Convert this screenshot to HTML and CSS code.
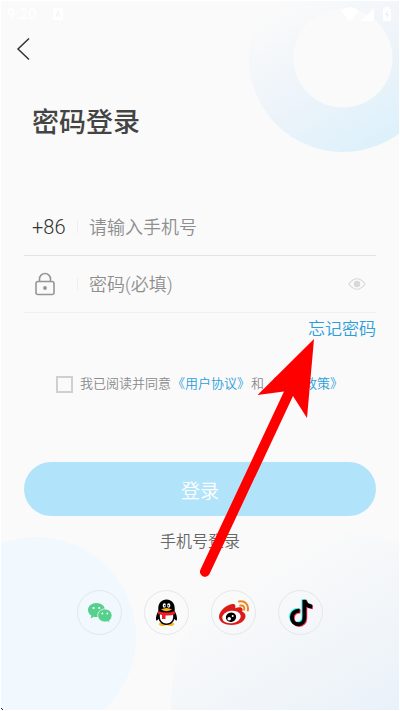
FILE: index.html
```html
<!DOCTYPE html>
<html lang="zh-CN">
<head>
    <meta charset="UTF-8">
    <meta name="viewport" content="width=device-width, initial-scale=1.0">
    <title>密码登录</title>

    <link rel="stylesheet" href="styles.css">
</head>
<body>
    <div class="page">
        <!-- background circles -->
        <div class="circle circle-top"></div>
        <div class="circle circle-left"></div>
        <div class="circle circle-right"></div>

        <div class="status-bar">
            <span class="time">9:20</span>
            <svg class="app-icon" width="12" height="12" viewBox="0 0 12 12">
                <rect x="1" width="10" height="12" rx="2" fill="#fff"/>
                <path d="M4 9 6 3 8 9M4.500 7h3" stroke="#f5f5f5" fill="none"/>
            </svg>
            <svg class="signals" width="52" height="16" viewBox="0 0 52 16">
                <path d="M0 4.500Q9 -2.500 18 4.500L9 15Z" fill="#fff"/>
                <path d="M20 15 33 2V15Z" fill="#fff"/>
                <path d="M42 3h2V1h4v2h2v12h-8Z" fill="#fff"/>
                <path d="M47 4l-3 5h2l-1 4 3-5h-2Z" fill="#e3eff7"/>
            </svg>
        </div>

        <header class="top">
            <button class="btn-back" type="button" aria-label="返回">
                <svg width="14" height="24" viewBox="0 0 14 24">
                    <path d="M13 1.500 2 12 13 22.500" fill="none" stroke="#333" stroke-width="1.500"/>
                </svg>
            </button>
        </header>

        <main class="content">
            <h1 class="title">密码登录</h1>

            <form class="form">
                <div class="field">
                    <label class="prefix" for="phone">+86</label>
                    <input id="phone" type="tel" placeholder="请输入手机号">
                </div>
                <div class="field field-light">
                    <label class="prefix" for="password" aria-label="密码">
                        <svg class="lock" width="20" height="24" viewBox="0 0 20 24">
                            <rect x="1" y="9.500" width="18" height="13" rx="2" fill="none" stroke="#969696" stroke-width="1.600"/>
                            <path d="M4.500 9.500V7a5.500 5.500 0 0 1 11 0v2.500" fill="none" stroke="#969696" stroke-width="1.600"/>
                            <circle cx="10" cy="16" r="1.900" fill="#969696"/>
                        </svg>
                    </label>
                    <input id="password" type="password" placeholder="密码(必填)">
                    <button class="btn-eye" type="button" aria-label="显示密码">
                        <svg width="18" height="12" viewBox="0 0 18 12">
                            <path d="M.8 6Q9-4.500 17.200 6 9 16.500.8 6Z" fill="none" stroke="#d8d8d8" stroke-width="1.200"/>
                            <circle cx="9" cy="6" r="3.200" fill="#d8d8d8"/>
                        </svg>
                    </button>
                </div>

                <a class="forgot" href="#">忘记密码</a>

                <div class="agree">
                    <input id="agree" type="checkbox">
                    <label for="agree">我已阅读并同意</label>
                    <a href="#">《用户协议》</a>
                    <span>和</span>
                    <a href="#">《隐私政策》</a>
                </div>

                <button class="btn-login" type="submit">登录</button>
            </form>

            <a class="phone-login" href="#">手机号登录</a>

            <div class="socials">
                <button class="social" type="button" aria-label="微信">
                    <svg width="24" height="20" viewBox="0 0 24 20">
                        <path d="M8.500 0C3.800 0 0 3.100 0 7c0 2.300 1.300 4.200 3.300 5.500L2.700 15.500 5.800 13.700C10 15 17 12.500 17 7 17 3.100 13.200 0 8.500 0Z" fill="#56d08d"/>
                        <path d="M17 6c-4 0-7.300 2.900-7.300 6.500S13 19 17 19c.9 0 1.800-.1 2.600-.4L22 20l-.6-2.500c1.600-1.200 2.600-3 2.600-5C24 8.900 21 6 17 6Z" fill="#56d08d" stroke="#f3f9fd" stroke-width=".8"/>
                        <g fill="#fff">
                            <circle cx="5.600" cy="5" r="1.100"/>
                            <circle cx="11.200" cy="5" r="1.100"/>
                            <circle cx="14.400" cy="10.500" r=".9"/>
                            <circle cx="19.300" cy="10.500" r=".9"/>
                        </g>
                    </svg>
                </button>
                <button class="social" type="button" aria-label="QQ">
                    <svg width="23" height="28" viewBox="0 0 22 28">
                        <path d="M3.500 25c0-1.500 3-2 5-1.500h5c2-.5 5 0 5 1.500 0 2.500-5.500 2.200-7.500 1-2 1.200-7.500 1.500-7.500-1Z" fill="#fbb416"/>
                        <path d="M11 .5C6 .5 2.800 4.200 2.800 9v3C1.500 14.500 0 18 .6 21c.3 1.200 1.400.5 2.400-1.200C4 23.500 7 26 11 26s7-2.500 8-6.200c1 1.700 2.100 2.400 2.400 1.200.6-3-.9-6.500-2.200-9V9c0-4.800-3.200-8.500-8.200-8.500Z" fill="#000"/>
                        <path d="M4.500 15h13c1 5-1.500 9.500-6.500 9.500S3.500 20 4.500 15Z" fill="#fff"/>
                        <ellipse cx="8.800" cy="6.500" rx="1.600" ry="2.200" fill="#fff"/>
                        <ellipse cx="13.200" cy="6.500" rx="1.600" ry="2.200" fill="#fff"/>
                        <circle cx="9.300" cy="6.800" r=".8"/>
                        <circle cx="12.800" cy="6.800" r=".8"/>
                        <path d="M5.500 10.500Q11 7.500 16.500 10.500 11 14 5.500 10.500Z" fill="#fbb416"/>
                        <path d="M2.800 12Q11 15 19.200 12L19.600 15Q15 17 10 16.500V20H6.500V16Q4 15.700 2.400 15Z" fill="#ee1c24"/>
                    </svg>
                </button>
                <button class="social" type="button" aria-label="微博">
                    <svg width="32" height="26" viewBox="0 0 32 26">
                        <path d="M11 5C5.500 7 1 12.500 1 17c0 5 6 8 12.500 8C22 25 27.500 20.500 27.500 16c0-2.500-1.600-3.700-3.300-4.300.8-2.200.3-3.700-1-4.200-1.600-.6-4 0-6 .8.800-3.200-.2-6-6.200-3.300Z" fill="#db1b17"/>
                        <ellipse cx="13.500" cy="17" rx="9.300" ry="6.300" transform="rotate(-7 13.500 17)" fill="#fff"/>
                        <ellipse cx="13" cy="17.200" rx="5.200" ry="4.700" transform="rotate(-15 13 17.200)" fill="#000"/>
                        <circle cx="11.200" cy="18.800" r="1.800" fill="#fff"/>
                        <circle cx="14.700" cy="16" r="1" fill="#fff"/>
                        <path d="M21 1.500c6-1.200 10 3.300 8.800 9M22.300 5.500c3-.5 4.500 1.600 3.800 4.200" fill="none" stroke="#ee8418" stroke-width="2" stroke-linecap="round"/>
                    </svg>
                </button>
                <button class="social" type="button" aria-label="抖音">
                    <svg width="24" height="28" viewBox="0 0 24 28">
                        <g fill="none" stroke-width="3.900">
                            <path d="M9.700 11.500C4.500 11 1.900 14.700 2 18.300c.2 4 3 6.700 6.300 6.700 4 0 6.200-3 6.200-6.700V.8c.5 4 3.500 6.200 7.700 6.500" transform="translate(0 -.5)" stroke="#25f4ee"/>
                            <path d="M9.700 11.500C4.500 11 1.900 14.700 2 18.300c.2 4 3 6.700 6.300 6.700 4 0 6.200-3 6.200-6.700V.8c.5 4 3.500 6.200 7.700 6.500" transform="translate(1.800 1)" stroke="#fe2c55"/>
                            <path d="M9.700 11.500C4.500 11 1.900 14.700 2 18.300c.2 4 3 6.700 6.300 6.700 4 0 6.200-3 6.200-6.700V.8c.5 4 3.500 6.200 7.700 6.500" transform="translate(.9 .3)" stroke="#000"/>
                        </g>
                    </svg>
                </button>
            </div>
        </main>

        <!-- arrow pointing to the forgot password link -->
        <svg class="arrow" width="120" height="240" viewBox="0 0 120 240">
            <path d="M114 1 57.500 57 84 53.500 0.500 231.500A5 5 0 0 0 9.500 236L93 58 107 80Z" fill="#f00"/>
        </svg>
        <svg class="corner" width="5" height="5" viewBox="0 0 5 5">
            <path d="M0 1 4 5" stroke="#222" stroke-width="1"/>
        </svg>
    </div>
</body>
</html>
```
FILE: styles.css
```css
*{
    box-sizing: border-box;
}

body{
    margin: 0;
    font-family: Roboto, "Noto Sans CJK SC", sans-serif;
    font-weight: 350;
    color: #333;
}

.page{
    position: relative;
    min-height: 100vh;
    overflow: hidden;
    background-color: #fafafa;
    border: 1px solid #fff;
}

a{
    color: #2b9edb;
    text-decoration: none;
}

button{
    padding: 0;
    border: 0;
    background: none;
    font: inherit;
    cursor: pointer;
}

svg{
    display: block;
}

/* background */
.circle{
    position: absolute;
    border-radius: 50%;
}

.circle-top{
    top: -37px;
    right: -38px;
    width: 188px;
    height: 188px;
    background: radial-gradient(circle, #fafafa 49px, transparent 50px),
                linear-gradient(150deg, #fafafa 20%, #ebf3fa 60%, #ddf1fb 85%);
}

.circle-left{
    bottom: -27px;
    left: -65px;
    width: 200px;
    height: 200px;
    background-color: #f1f8fe;
}

.circle-right{
    right: -112px;
    bottom: -164px;
    width: 340px;
    height: 340px;
    background: linear-gradient(150deg, #fafafa 15%, #eff4f9 45%, #e0edf9 75%);
}

/* top */
.status-bar{
    position: relative;
    display: flex;
    align-items: center;
    height: 26px;
    padding: 0 6px;
    color: #fff;
    font-size: 15px;
    font-weight: 500;
}

.app-icon{
    margin-left: 15px;
}

.signals{
    margin-left: auto;
}

.top{
    position: relative;
    display: flex;
    padding: 10px 15px;
}

.btn-back{
    height: 24px;
}

.content{
    position: relative;
    display: flex;
    flex-direction: column;
    align-items: center;
    padding: 32px 23px 75px;
}

.title{
    align-self: flex-start;
    margin: 0 0 56px 8px;
    font-size: 27px;
    font-weight: 500;
    line-height: 40px;
    color: #444;
}

/* form */
.form{
    display: flex;
    flex-direction: column;
    width: 100%;
}

.field{
    display: flex;
    align-items: center;
    height: 57px;
    padding: 0 10px 0 8px;
    border-bottom: 1px solid #e2e4e8;
}

.field-light{
    border-color: #f0f0f0;
}

.prefix{
    position: relative;
    flex: none;
    width: 46px;
    font-size: 20px;
    line-height: 24px;
}

.prefix::after{
    content: "";
    position: absolute;
    top: 6px;
    right: 0;
    width: 1px;
    height: 12px;
    background-color: #eee;
}

.lock{
    margin-left: 3px;
}

.field input{
    flex: 1;
    min-width: 0;
    margin-left: 11px;
    padding: 0;
    border: 0;
    outline: 0;
    background: none;
    font: inherit;
    font-size: 18px;
    color: #333;
}

.field input::placeholder{
    color: #8e8e8e;
    opacity: 1;
}

.forgot{
    align-self: flex-end;
    margin-top: 4px;
    font-size: 17px;
    line-height: 24px;
}

.agree{
    display: flex;
    justify-content: center;
    align-items: center;
    margin-top: 33px;
    font-size: 13px;
    line-height: 20px;
    color: #8a8a8a;
}

.agree a{
    padding: 0 1px;
}

.agree input{
    appearance: none;
    width: 17px;
    height: 17px;
    margin: 0 7px 0 0;
    border: 2px solid #d0d0d0;
}

.btn-login{
    height: 54px;
    margin-top: 68px;
    border-radius: 27px;
    background-color: #b1e4fb;
    color: #fff;
    font-size: 19px;
}

.phone-login{
    margin-top: 14px;
    font-size: 16px;
    line-height: 24px;
    color: #666;
}

.socials{
    display: flex;
    gap: 22px;
    margin-top: 36px;
}

.social{
    display: flex;
    justify-content: center;
    align-items: center;
    width: 45px;
    height: 45px;
    border: 1px solid #e6e7e9;
    border-radius: 50%;
}

/* on top of everything */
.arrow{
    position: absolute;
    top: 337px;
    left: 199px;
    pointer-events: none;
}

.corner{
    position: absolute;
    bottom: -1px;
    left: -1px;
}
```
